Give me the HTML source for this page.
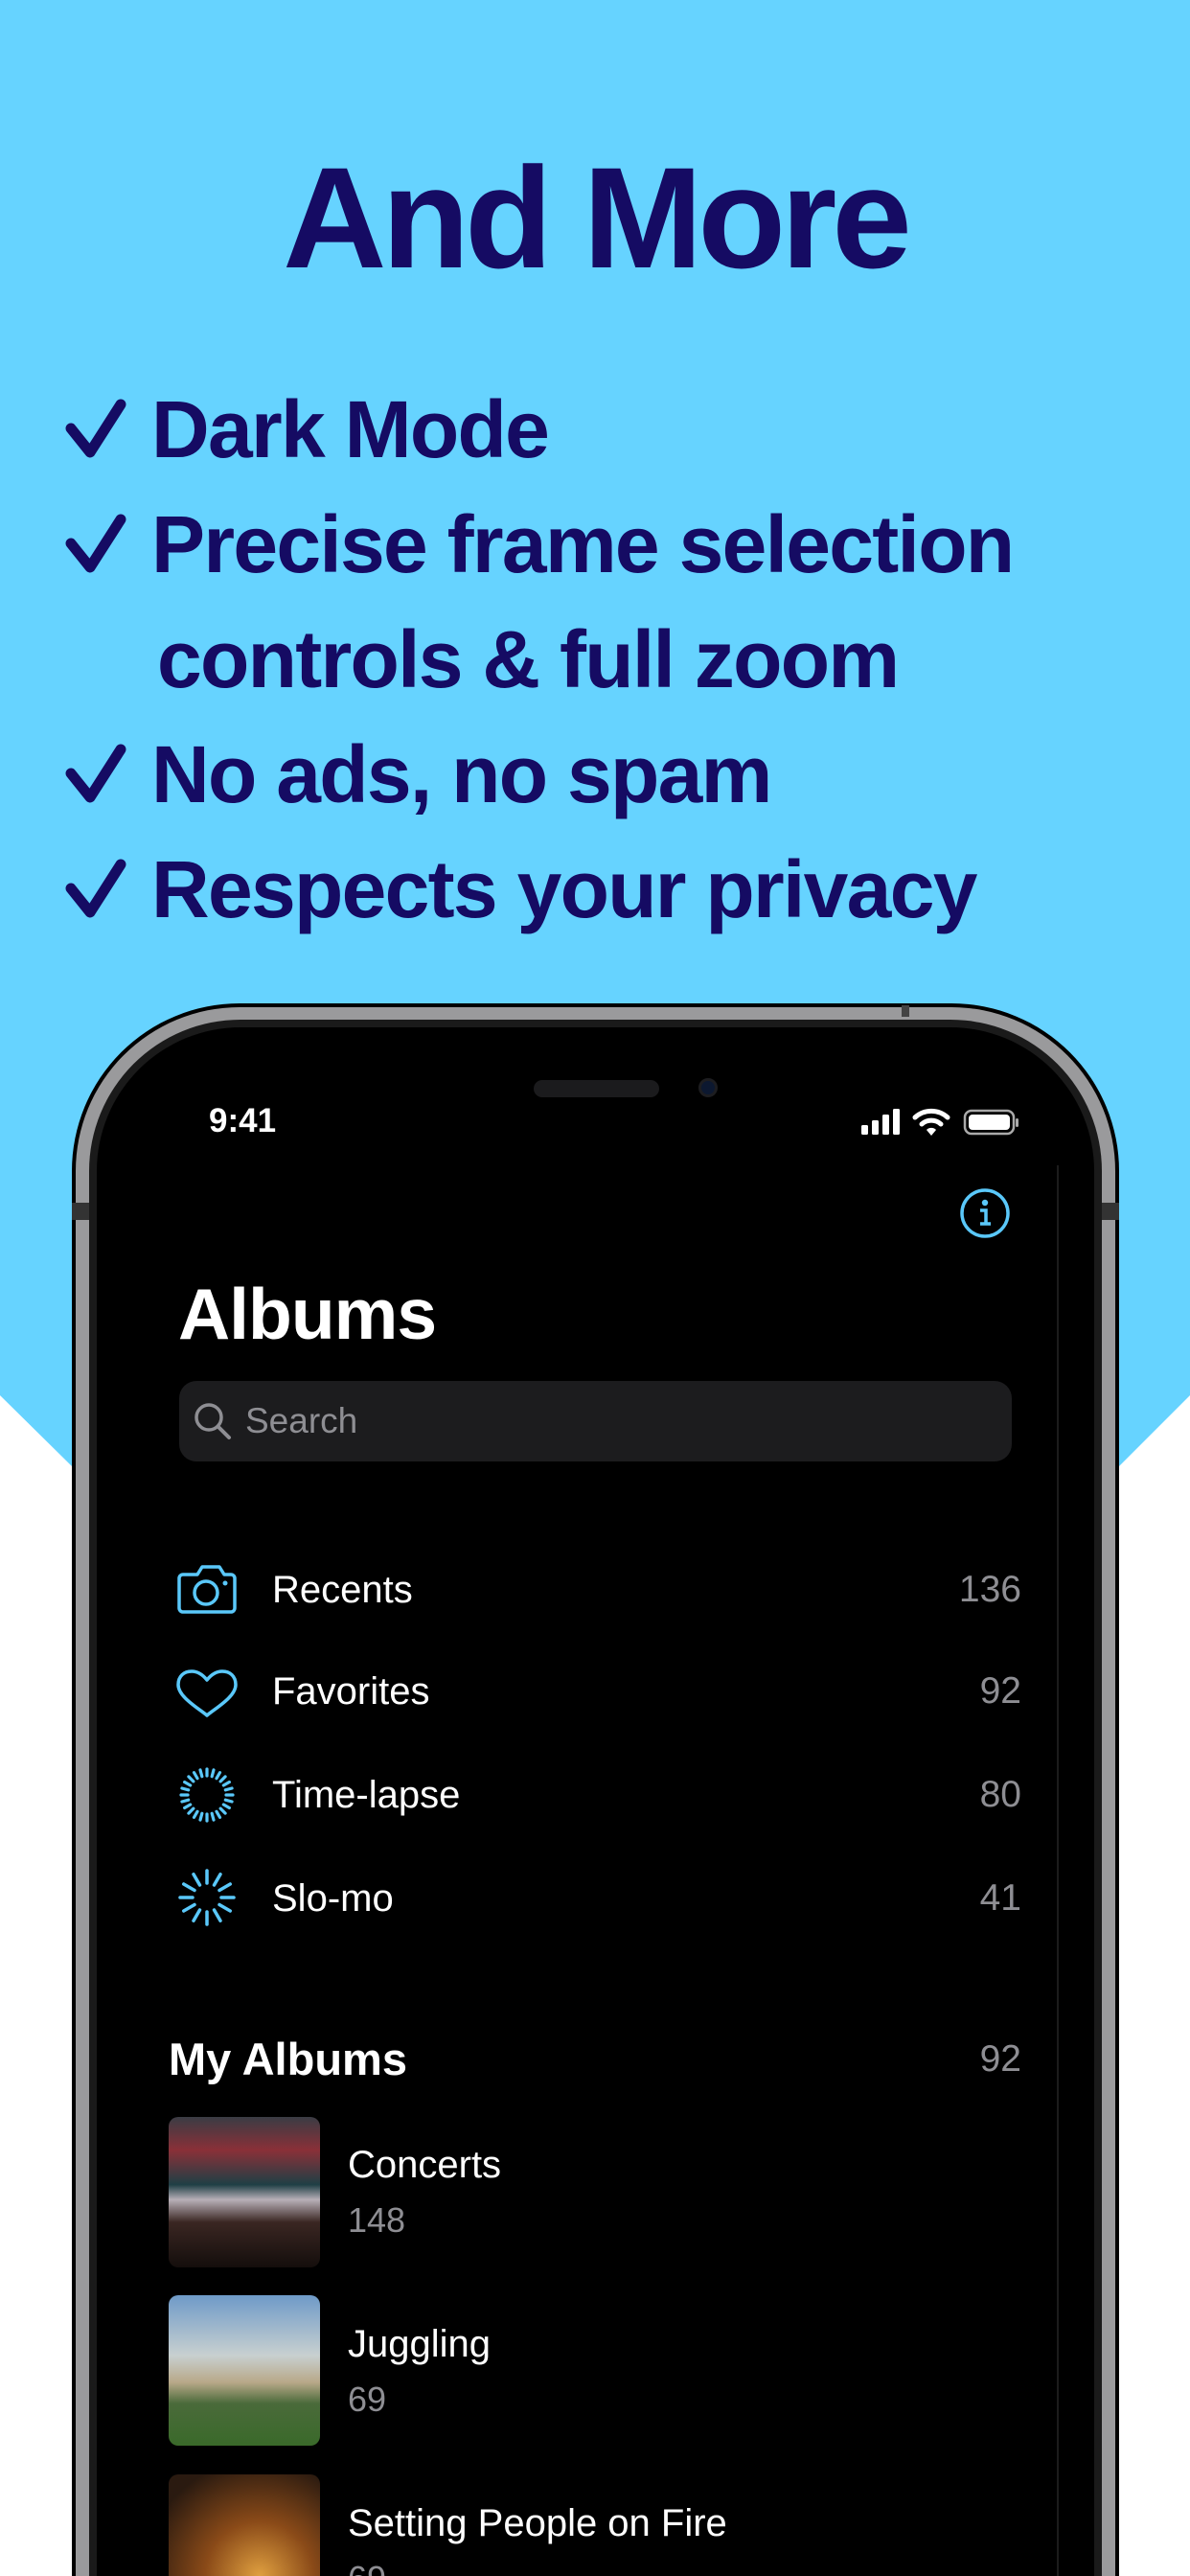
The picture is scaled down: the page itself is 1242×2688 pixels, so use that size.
<!DOCTYPE html>
<html style="overflow:hidden;height:2688px"><head><meta charset="utf-8"><style>
*{margin:0;padding:0;box-sizing:border-box}
body{width:1242px;height:2688px;overflow:hidden;background:#fff;font-family:"Liberation Sans",sans-serif}
#wrap{position:relative;width:1242px;height:2688px;overflow:hidden}
.abs{position:absolute}
.h{color:#150b63;font-weight:bold;white-space:nowrap}
.w{color:#fff;white-space:nowrap}
.g{color:#8e8e93;white-space:nowrap}
</style></head><body><div id="wrap">
<svg class="abs" style="left:0;top:0" width="1242" height="1600"><polygon points="0,0 1242,0 1242,1456 1168,1530 75,1530 0,1456" fill="#66d3ff"/></svg>
<div class="abs h" style="left:0;width:1242px;text-align:center;top:142px;font-size:150px;line-height:170px;letter-spacing:-5px">And More</div>
<svg class="abs" style="left:0;top:0" width="160" height="960">
<g fill="none" stroke="#150b63" stroke-width="11" stroke-linecap="round" stroke-linejoin="round">
<path d="M74,447 L94,472 L126,422"/><path d="M74,567 L94,592 L126,542"/><path d="M74,807 L94,832 L126,782"/><path d="M74,927 L94,952 L126,902"/></g></svg>
<div class="abs h" style="left:158px;top:398px;font-size:84px;line-height:100px;letter-spacing:-1.7px">Dark Mode</div>
<div class="abs h" style="left:158px;top:518px;font-size:84px;line-height:100px;letter-spacing:-1.7px">Precise frame selection</div>
<div class="abs h" style="left:164px;top:638px;font-size:84px;line-height:100px;letter-spacing:-1.7px">controls &amp; full zoom</div>
<div class="abs h" style="left:158px;top:758px;font-size:84px;line-height:100px;letter-spacing:-1.7px">No ads, no spam</div>
<div class="abs h" style="left:158px;top:878px;font-size:84px;line-height:100px;letter-spacing:-1.7px">Respects your privacy</div>

<div class="abs" style="left:75px;top:1047px;width:1093px;height:1641px;border-radius:175px 175px 0 0;background:#000;"></div>
<div class="abs" style="left:79px;top:1051px;width:1085px;height:1637px;border-radius:171px 171px 0 0;background:#9a9a9c;"></div>
<div class="abs" style="left:93px;top:1064px;width:1057px;height:1624px;border-radius:158px 158px 0 0;background:#1a1a1a;"></div>
<div class="abs" style="left:101px;top:1072px;width:1041px;height:1616px;border-radius:150px 150px 0 0;background:#000;"></div>
<div class="abs" style="left:75px;top:1255px;width:18px;height:18px;background:#333"></div>
<div class="abs" style="left:1150px;top:1255px;width:18px;height:18px;background:#333"></div>
<div class="abs" style="left:941px;top:1049px;width:8px;height:12px;background:#444"></div>
<div class="abs" style="left:1103px;top:1216px;width:2px;height:1472px;background:#1c1c1c"></div>

<div class="abs" style="left:557px;top:1127px;width:131px;height:18px;border-radius:9px;background:#1b1b1d"></div>
<div class="abs" style="left:729px;top:1125px;width:20px;height:20px;border-radius:10px;background:#0c1830;border:3px solid #1d1d20"></div>

<div class="abs w" style="left:218px;top:1150px;font-size:35px;font-weight:bold;line-height:40px">9:41</div>
<svg class="abs" style="left:895px;top:1150px" width="175" height="40">
<rect x="4" y="24" width="7" height="10" rx="1.5" fill="#fff"/><rect x="15" y="19" width="7" height="15" rx="1.5" fill="#fff"/><rect x="26" y="13" width="7" height="21" rx="1.5" fill="#fff"/><rect x="37" y="7" width="7" height="27" rx="1.5" fill="#fff"/>
<g fill="none" stroke="#fff" stroke-width="5" stroke-linecap="round"><path d="M60,16 A25,25 0 0 1 94,16"/><path d="M67,23 A15,15 0 0 1 87,23"/></g><path d="M72,29 L77,35 L82,29 A7,7 0 0 0 72,29Z" fill="#fff"/>
<rect x="112" y="9" width="51" height="24" rx="7" fill="none" stroke="#aaa" stroke-width="2.5"/><rect x="116" y="13" width="43" height="16" rx="4" fill="#fff"/><rect x="165" y="17" width="3" height="9" rx="1.5" fill="#aaa"/>
</svg>
<svg class="abs" style="left:1000px;top:1238px" width="56" height="56"><circle cx="28" cy="28" r="24" fill="none" stroke="#5ac8fa" stroke-width="3.5"/><circle cx="28" cy="17" r="3.2" fill="#5ac8fa"/><path d="M23,25 H29 V39 M23,39 H34" fill="none" stroke="#5ac8fa" stroke-width="3.5"/></svg>

<div class="abs w" style="left:186px;top:1328px;font-size:75px;font-weight:bold;line-height:86px;letter-spacing:-1px">Albums</div>
<div class="abs" style="left:187px;top:1441px;width:869px;height:84px;border-radius:18px;background:#1c1c1e"></div>
<svg class="abs" style="left:200px;top:1462px" width="44" height="44"><circle cx="18" cy="17" r="13" fill="none" stroke="#8e8e93" stroke-width="3.5"/><path d="M28,27 L39,38" stroke="#8e8e93" stroke-width="4" stroke-linecap="round"/></svg>
<div class="abs g" style="left:256px;top:1461px;font-size:37px;line-height:44px">Search</div>

<svg class="abs" style="left:180px;top:1625px" width="80" height="200">
<g fill="none" stroke="#5ac8fa" stroke-width="3.5" stroke-linejoin="round">
<path d="M11,18 H26 L31,10 H49 L54,18 H61 A4,4 0 0 1 65,22 V53 A4,4 0 0 1 61,57 H11 A4,4 0 0 1 7,53 V22 A4,4 0 0 1 11,18Z"/>
<circle cx="35" cy="37" r="12"/>
<path d="M36,165 C28,158 6,146 6,133 C6,124 12,119 20,119 C27,119 32,123 36,128 C40,123 45,119 52,119 C60,119 66,124 66,133 C66,146 44,158 36,165Z"/>
</g><circle cx="55" cy="27" r="2.5" fill="#5ac8fa"/>
</svg>
<svg class="abs" style="left:186px;top:1843px" width="60" height="60"><g stroke="#5ac8fa" stroke-width="3.2" stroke-linecap="round" transform="translate(30,30)">
<line x1="0" y1="-27" x2="0" y2="-20"/><line x1="0" y1="-27" x2="0" y2="-20" transform="rotate(15)"/><line x1="0" y1="-27" x2="0" y2="-20" transform="rotate(30)"/><line x1="0" y1="-27" x2="0" y2="-20" transform="rotate(45)"/><line x1="0" y1="-27" x2="0" y2="-20" transform="rotate(60)"/><line x1="0" y1="-27" x2="0" y2="-20" transform="rotate(75)"/><line x1="0" y1="-27" x2="0" y2="-20" transform="rotate(90)"/><line x1="0" y1="-27" x2="0" y2="-20" transform="rotate(105)"/><line x1="0" y1="-27" x2="0" y2="-20" transform="rotate(120)"/><line x1="0" y1="-27" x2="0" y2="-20" transform="rotate(135)"/><line x1="0" y1="-27" x2="0" y2="-20" transform="rotate(150)"/><line x1="0" y1="-27" x2="0" y2="-20" transform="rotate(165)"/><line x1="0" y1="-27" x2="0" y2="-20" transform="rotate(180)"/><line x1="0" y1="-27" x2="0" y2="-20" transform="rotate(195)"/><line x1="0" y1="-27" x2="0" y2="-20" transform="rotate(210)"/><line x1="0" y1="-27" x2="0" y2="-20" transform="rotate(225)"/><line x1="0" y1="-27" x2="0" y2="-20" transform="rotate(240)"/><line x1="0" y1="-27" x2="0" y2="-20" transform="rotate(255)"/><line x1="0" y1="-27" x2="0" y2="-20" transform="rotate(270)"/><line x1="0" y1="-27" x2="0" y2="-20" transform="rotate(285)"/><line x1="0" y1="-27" x2="0" y2="-20" transform="rotate(300)"/><line x1="0" y1="-27" x2="0" y2="-20" transform="rotate(315)"/><line x1="0" y1="-27" x2="0" y2="-20" transform="rotate(330)"/><line x1="0" y1="-27" x2="0" y2="-20" transform="rotate(345)"/>
</g></svg>
<svg class="abs" style="left:186px;top:1950px" width="60" height="60"><g stroke="#5ac8fa" stroke-width="3.5" stroke-linecap="round" transform="translate(30,30)">
<line x1="0" y1="-28" x2="0" y2="-15"/><line x1="0" y1="-28" x2="0" y2="-15" transform="rotate(30)"/><line x1="0" y1="-28" x2="0" y2="-15" transform="rotate(60)"/><line x1="0" y1="-28" x2="0" y2="-15" transform="rotate(90)"/><line x1="0" y1="-28" x2="0" y2="-15" transform="rotate(120)"/><line x1="0" y1="-28" x2="0" y2="-15" transform="rotate(150)"/><line x1="0" y1="-28" x2="0" y2="-15" transform="rotate(180)"/><line x1="0" y1="-28" x2="0" y2="-15" transform="rotate(210)"/><line x1="0" y1="-28" x2="0" y2="-15" transform="rotate(240)"/><line x1="0" y1="-28" x2="0" y2="-15" transform="rotate(270)"/><line x1="0" y1="-28" x2="0" y2="-15" transform="rotate(300)"/><line x1="0" y1="-28" x2="0" y2="-15" transform="rotate(330)"/>
</g></svg>

<div class="abs w" style="left:284px;top:1636px;font-size:40px;line-height:46px">Recents</div>
<div class="abs g" style="left:866px;width:200px;text-align:right;top:1636px;font-size:39px;line-height:46px">136</div>
<div class="abs w" style="left:284px;top:1742px;font-size:40px;line-height:46px">Favorites</div>
<div class="abs g" style="left:866px;width:200px;text-align:right;top:1742px;font-size:39px;line-height:46px">92</div>
<div class="abs w" style="left:284px;top:1850px;font-size:40px;line-height:46px">Time-lapse</div>
<div class="abs g" style="left:866px;width:200px;text-align:right;top:1850px;font-size:39px;line-height:46px">80</div>
<div class="abs w" style="left:284px;top:1958px;font-size:40px;line-height:46px">Slo-mo</div>
<div class="abs g" style="left:866px;width:200px;text-align:right;top:1958px;font-size:39px;line-height:46px">41</div>

<div class="abs w" style="left:176px;top:2122px;font-size:47px;font-weight:bold;line-height:54px">My Albums</div>
<div class="abs g" style="left:866px;width:200px;text-align:right;top:2126px;font-size:39px;line-height:46px">92</div>

<div class="abs" style="left:176px;top:2209px;width:158px;height:157px;border-radius:10px;overflow:hidden;background:linear-gradient(180deg,#3a3c44 0%,#8a3038 22%,#1f3f45 45%,#b8b0b8 55%,#3a2622 70%,#140e0c 100%)"></div>
<div class="abs w" style="left:363px;top:2236px;font-size:40px;line-height:46px">Concerts</div>
<div class="abs g" style="left:363px;top:2295px;font-size:36px;line-height:44px">148</div>

<div class="abs" style="left:176px;top:2395px;width:158px;height:157px;border-radius:10px;overflow:hidden;background:linear-gradient(180deg,#6e9ac8 0%,#c8d0d0 40%,#b8a888 58%,#4a6a3a 72%,#3a6a2a 100%)"></div>
<div class="abs w" style="left:363px;top:2423px;font-size:40px;line-height:46px">Juggling</div>
<div class="abs g" style="left:363px;top:2482px;font-size:36px;line-height:44px">69</div>

<div class="abs" style="left:176px;top:2582px;width:158px;height:106px;border-radius:10px 10px 0 0;overflow:hidden;background:radial-gradient(circle at 60% 100%,#e0a040 0%,#8a4a18 40%,#2a1a10 85%)"></div>
<div class="abs w" style="left:363px;top:2610px;font-size:40px;line-height:46px">Setting People on Fire</div>
<div class="abs g" style="left:363px;top:2669px;height:19px;overflow:hidden;font-size:36px;line-height:44px">69</div>
</div></body></html>
